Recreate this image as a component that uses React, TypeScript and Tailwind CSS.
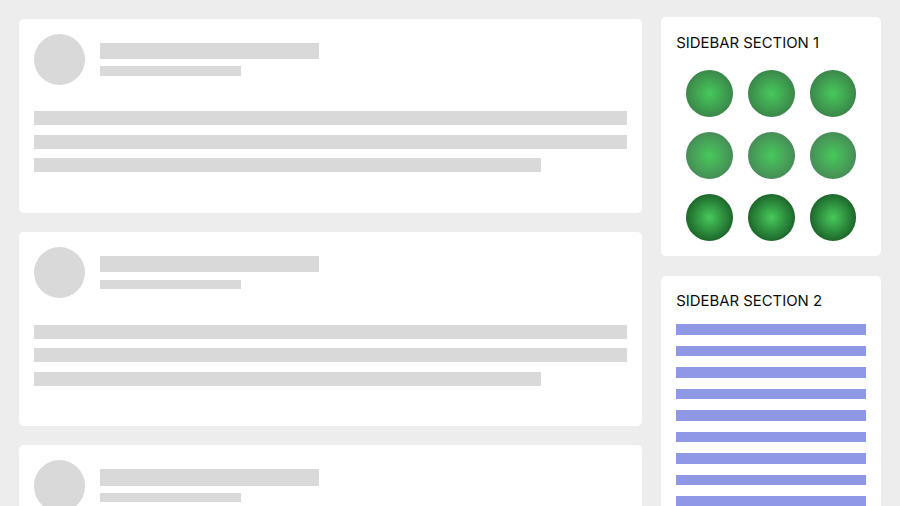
import React from "react";

const PostCard = () => (
  <div className="bg-white rounded-[5px] h-[194.6px] p-[15px] shrink-0">
    <div className="flex items-center">
      <div className="w-[51.5px] h-[51.5px] rounded-full bg-[#d9d9d9] shrink-0"></div>
      <div className="ml-[15.3px] flex flex-col">
        <div className="w-[219px] h-[16.2px] bg-[#d9d9d9]"></div>
        <div className="w-[141px] h-[9.6px] mt-[7.4px] bg-[#d9d9d9]"></div>
      </div>
    </div>
    <div className="mt-[26.2px] flex flex-col gap-[9.3px]">
      <div className="h-[14.2px] bg-[#d9d9d9]"></div>
      <div className="h-[14.2px] bg-[#d9d9d9]"></div>
      <div className="h-[14.2px] w-[507px] bg-[#d9d9d9]"></div>
    </div>
  </div>
);

const Ball = ({ className }: { className: string }) => (
  <div className={"w-[46.5px] h-[46.5px] rounded-full " + className}></div>
);

const App = () => {
  return (
    <div className="h-[506px] w-[900px] overflow-hidden bg-[#ededed] flex [font-family:Inter,sans-serif]">
      <div className="w-[623.5px] ml-[18.7px] pt-[18.6px] flex flex-col gap-[18.7px] shrink-0">
        <PostCard />
        <PostCard />
        <PostCard />
      </div>
      <div className="w-[220.5px] ml-[18.8px] pt-[17.3px] flex flex-col gap-[19.6px] shrink-0">
        <div className="bg-white rounded-[5px] h-[239px] shrink-0 pt-[15.6px] px-[15.2px]">
          <div className="text-[14.9px] leading-[20px] text-[#0d0d0d]">SIDEBAR SECTION 1</div>
          <div className="mt-[17.4px] px-[10px] grid grid-cols-3 gap-x-[15.4px] gap-y-[15.4px]">
            <Ball className="bg-[radial-gradient(closest-side,#47c95b_0%,#3b874a_100%)]" />
            <Ball className="bg-[radial-gradient(closest-side,#47c95b_0%,#3b874a_100%)]" />
            <Ball className="bg-[radial-gradient(closest-side,#47c95b_0%,#3b874a_100%)]" />
            <Ball className="bg-[radial-gradient(closest-side,#47c95b_0%,#478d57_100%)]" />
            <Ball className="bg-[radial-gradient(closest-side,#47c95b_0%,#478d57_100%)]" />
            <Ball className="bg-[radial-gradient(closest-side,#47c95b_0%,#478d57_100%)]" />
            <Ball className="bg-[radial-gradient(closest-side,#47c95b_0%,#1d672b_100%)]" />
            <Ball className="bg-[radial-gradient(closest-side,#47c95b_0%,#1d672b_100%)]" />
            <Ball className="bg-[radial-gradient(closest-side,#47c95b_0%,#1d672b_100%)]" />
          </div>
        </div>
        <div className="bg-white rounded-[5px] h-[300px] shrink-0 pt-[15px] px-[15.2px]">
          <div className="text-[14.9px] leading-[20px] text-[#0d0d0d]">SIDEBAR SECTION 2</div>
          <div className="mt-[13.4px] flex flex-col gap-[10.9px]">
            {[0, 1, 2, 3, 4, 5, 6, 7, 8].map((i) => (
              <div key={i} className="h-[10.6px] bg-[#8e98e4]"></div>
            ))}
          </div>
        </div>
      </div>
    </div>
  );
};

export default App;
